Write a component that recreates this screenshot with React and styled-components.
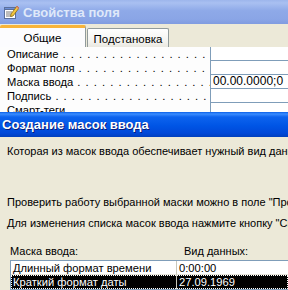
import React from "react";
import styled, { createGlobalStyle } from "styled-components";

const Global = createGlobalStyle`
  html, body { margin: 0; padding: 0; background: #ece9d8; }
  body { width: 288px; height: 290px; overflow: hidden; font-family: "Liberation Sans", "DejaVu Sans", sans-serif; font-size: 11px; color: #000; }
  #root { width: 288px; height: 290px; }
`;

const Screen = styled.div`
  width: 288px;
  height: 290px;
  overflow: hidden;
  display: flex;
  flex-direction: column;
  background: #ece9d8;
`;

const PropsWindow = styled.div`
  height: 112px;
  overflow: hidden;
  display: flex;
  flex-direction: column;
  flex: none;
`;

const TitleBar = styled.div`
  height: ${(p) => p.$h}px;
  flex: none;
  display: flex;
  align-items: center;
  gap: 4px;
  padding-left: ${(p) => p.$pad}px;
  font-family: "Liberation Sans", "DejaVu Sans", sans-serif;
  font-weight: bold;
  font-size: 13px;
  white-space: nowrap;
  overflow: hidden;
  background: ${(p) =>
    p.$active
      ? "linear-gradient(to bottom, #0a5fe8 0%, #3a8cff 8%, #0d63ee 20%, #0055e5 55%, #0048d8 85%, #003fbd 100%)"
      : "linear-gradient(to bottom, #9db6ec 0%, #a9c0f1 12%, #8ea9e8 45%, #8aa5e6 80%, #809ce0 100%)"};
  color: ${(p) => (p.$active ? "#ffffff" : "#dfe8f9")};
  text-shadow: ${(p) => (p.$active ? "1px 1px 0 #0a1c78" : "none")};
`;

const TabStrip = styled.div`
  height: 23px;
  flex: none;
  display: flex;
  align-items: flex-end;
  background: #ece9d8;
`;

const Tab = styled.div`
  box-sizing: border-box;
  height: ${(p) => (p.$active ? 22 : 19)}px;
  width: ${(p) => p.$w}px;
  display: flex;
  align-items: center;
  justify-content: center;
  font-size: 11.5px;
  background: ${(p) =>
    p.$active ? "#fcfcfe" : "linear-gradient(to bottom, #ffffff, #f3f3ef 70%, #eae8e0)"};
  border: 1px solid #919b9c;
  border-bottom: none;
  border-top: ${(p) => (p.$active ? "3px solid #f8b43a" : "1px solid #919b9c")};
  border-left: ${(p) => (p.$active ? "none" : "1px solid #919b9c")};
  border-radius: 2px 2px 0 0;
  padding-top: ${(p) => (p.$active ? 0 : 1)}px;
  margin-left: ${(p) => p.$ml || 0}px;
`;

const Grid = styled.div`
  display: grid;
  grid-template-columns: 210px 1fr;
  grid-auto-rows: 14px;
  background: #ffffff;
`;

const LabelCell = styled.div`
  box-sizing: border-box;
  padding-left: 7px;
  padding-right: 7px;
  white-space: nowrap;
  overflow: hidden;
  line-height: 14px;
  font-size: 11.2px;
  background: #fdfdfd;
`;

const Dots = styled.span`
  letter-spacing: 1px;
`;

const ValueCell = styled.div`
  box-sizing: border-box;
  border-left: 1px solid #7f9db9;
  border-bottom: 1px solid #7f9db9;
  padding-left: 2px;
  line-height: 13px;
  white-space: nowrap;
  overflow: hidden;
  font-size: 12px;
  background: #fff;
`;

const Dialog = styled.div`
  flex: 1;
  display: flex;
  flex-direction: column;
  background: #ece9d8;
  overflow: hidden;
`;

const Body = styled.div`
  display: flex;
  flex-direction: column;
  padding-left: 7px;
  white-space: nowrap;
  font-size: 11px;
`;

const Line = styled.div`
  line-height: 13px;
  height: 13px;
  margin-top: ${(p) => p.$mt}px;
`;

const Headers = styled.div`
  display: grid;
  grid-template-columns: 174px 1fr;
  margin-top: 15px;
  padding-left: 3px;
  line-height: 13px;
  height: 13px;
`;

const List = styled.div`
  margin-top: 2px;
  margin-left: 3px;
  border: 1px solid #7f9db9;
  border-right: none;
  background: #fff;
`;

const ListRow = styled.div`
  display: grid;
  grid-template-columns: 165px 1fr;
  height: 14px;
  line-height: 14px;
  background: ${(p) => (p.$sel ? "#000" : "#fff")};
  color: ${(p) => (p.$sel ? "#fff" : "#000")};
  outline: ${(p) => (p.$sel ? "1px dotted #ffffff" : "none")};
  outline-offset: -1px;
`;

const ListCell = styled.div`
  padding-left: 2px;
  border-left: ${(p) => (p.$first ? "none" : "1px solid #c9c7ba")};
  border-bottom: ${(p) => (p.$sel ? "none" : "1px solid #e6e4da")};
  box-sizing: border-box;
  overflow: hidden;
  font-size: 11.2px;
`;

const PropIcon = () => (
  <svg width="16" height="16" viewBox="0 0 16 16">
    <rect x="1.5" y="3.5" width="11" height="11" fill="#ffffff" stroke="#5a6f9c" />
    <rect x="1.5" y="3.5" width="11" height="2" fill="#6d8fd6" stroke="#5a6f9c" />
    <line x1="3" y1="8" x2="9" y2="8" stroke="#7a7a7a" />
    <line x1="3" y1="10" x2="8" y2="10" stroke="#7a7a7a" />
    <line x1="3" y1="12" x2="9" y2="12" stroke="#7a7a7a" />
    <path d="M8 10 L14 2 L16 4 L10 12 L7.5 12.5 Z" fill="#f3c640" stroke="#8a6a10" strokeWidth="0.8" />
    <path d="M14 2 L16 4 L15 5 L13 3 Z" fill="#e08080" />
  </svg>
);

const rows = [
  { label: "Описание", value: "" },
  { label: "Формат поля", value: "" },
  { label: "Маска ввода", value: "00.00.0000;0" },
  { label: "Подпись", value: "" },
  { label: "Смарт-теги", value: "" },
];

const dots = " . . . . . . . . . . . . . . . . . . . . . . . . . . . . . . . . . .";

export default function App() {
  return (
    <>
      <Global />
      <Screen>
        <PropsWindow>
          <TitleBar $h={24} $pad={3}>
            <PropIcon />
            <span>Свойства поля</span>
          </TitleBar>
          <TabStrip>
            <Tab $active $w={86}>Общие</Tab>
            <Tab $w={82} $ml={1}>Подстановка</Tab>
          </TabStrip>
          <Grid>
            {rows.map((r) => (
              <React.Fragment key={r.label}>
                <LabelCell>
                  {r.label}
                  <Dots>{dots}</Dots>
                </LabelCell>
                <ValueCell>{r.value}</ValueCell>
              </React.Fragment>
            ))}
          </Grid>
        </PropsWindow>
        <Dialog>
          <TitleBar $active $h={25} $pad={2}>
            <span>Создание масок ввода</span>
          </TitleBar>
          <Body>
            <Line $mt={8}>Которая из масок ввода обеспечивает нужный вид данных?</Line>
            <Line $mt={38}>Проверить работу выбранной маски можно в поле "Проба".</Line>
            <Line $mt={8}>Для изменения списка масок ввода нажмите кнопку "Список".</Line>
            <Headers>
              <span>Маска ввода:</span>
              <span>Вид данных:</span>
            </Headers>
            <List>
              <ListRow>
                <ListCell $first>Длинный формат времени</ListCell>
                <ListCell>0:00:00</ListCell>
              </ListRow>
              <ListRow $sel>
                <ListCell $first $sel>Краткий формат даты</ListCell>
                <ListCell $sel>27.09.1969</ListCell>
              </ListRow>
            </List>
          </Body>
        </Dialog>
      </Screen>
    </>
  );
}
